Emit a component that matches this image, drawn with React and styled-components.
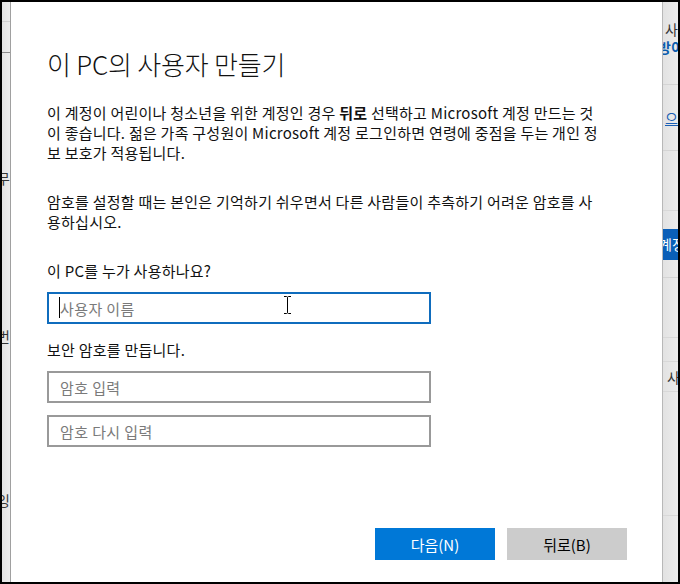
import React from "react";
import styled, { createGlobalStyle } from "styled-components";

const GlobalStyle = createGlobalStyle`
  html, body {
    margin: 0;
    padding: 0;
    background: #000;
  }
  body {
    font-family: "Noto Sans CJK KR", "Noto Sans", sans-serif;
  }
  * { box-sizing: border-box; }
`;

const Frame = styled.div`
  display: flex;
  width: 680px;
  height: 584px;
  padding: 2px;
  background: #000;
  overflow: hidden;
`;

const SideStrip = styled.div`
  position: relative;
  display: flex;
  flex-direction: column;
  width: ${(p) => p.$width || "auto"};
  flex: ${(p) => (p.$grow ? 1 : "none")};
  background: linear-gradient(90deg, #e2e2e2, #ececec);
  overflow: hidden;
  font-size: 14px;
  color: #333;
`;

const StripRow = styled.div`
  display: flex;
  justify-content: ${(p) => (p.$clipLeft ? "flex-end" : "flex-start")};
  align-items: center;
  height: ${(p) => p.$h}px;
  border-bottom: 1px solid ${(p) => p.$line || "transparent"};
  white-space: nowrap;
  color: ${(p) => p.$color || "#333"};
  background: ${(p) => p.$bg || "transparent"};
  font-weight: ${(p) => (p.$bold ? 700 : 400)};
  text-decoration: ${(p) => (p.$underline ? "underline" : "none")};
  padding-left: ${(p) => p.$indent || 0}px;
`;

const Dialog = styled.div`
  display: flex;
  flex-direction: column;
  width: 653px;
  height: 100%;
  background: #fff;
  border-left: 1px solid #a0a0a0;
  border-right: 1px solid #b8b8b8;
  padding: 45px 35px 22px 36px;
  color: #000;
`;

const Title = styled.h1`
  margin: 0 0 22px 0;
  font-size: 26px;
  line-height: 34px;
  font-weight: 300;
  color: #111;
  letter-spacing: -0.2px;
`;

const Paragraph = styled.p`
  margin: 0 0 ${(p) => p.$after || 0}px 0;
  font-size: 15px;
  line-height: 20px;
  font-weight: 400;
  letter-spacing: 0.25px;
  color: #111;
  white-space: nowrap;
  strong { font-weight: 700; }
`;

const Label = styled.div`
  margin: 0 0 11px 0;
  font-size: 15px;
  line-height: 20px;
  letter-spacing: 0.25px;
  color: #111;
`;

const FieldWrap = styled.div`
  position: relative;
  width: 384px;
  height: 32px;
  margin-bottom: ${(p) => p.$after || 0}px;
`;

const Field = styled.input`
  width: 100%;
  height: 100%;
  border: 2px solid ${(p) => (p.$focused ? "#0f6cbd" : "#999")};
  padding: 0 0 0 11px;
  font-family: inherit;
  font-size: 15px;
  letter-spacing: 0.4px;
  color: #000;
  background: #fff;
  outline: none;
  border-radius: 0;
  &::placeholder {
    color: #7a7a7a;
  }
`;

const Caret = styled.span`
  position: absolute;
  left: 12px;
  top: 5px;
  width: 1px;
  height: 21px;
  background: #000;
`;

const Pointer = styled.svg`
  position: absolute;
  left: 236px;
  top: 3px;
`;

const Buttons = styled.div`
  display: flex;
  justify-content: flex-end;
  gap: 12px;
  margin-top: auto;
`;

const Button = styled.button`
  width: 120px;
  height: 32px;
  border: none;
  border-radius: 0;
  font-family: inherit;
  font-size: 15px;
  color: ${(p) => (p.$primary ? "#fff" : "#000")};
  background: ${(p) => (p.$primary ? "#0078d7" : "#cccccc")};
  padding: 0;
`;

export default function App() {
  return (
    <>
      <GlobalStyle />
      <Frame>
        <SideStrip $width="8px">
          <StripRow $h={20} $line="#d0d0d0" />
          <StripRow $h={31} $line="#8a8a8a" />
          <StripRow $h={113} />
          <StripRow $h={24} $clipLeft>설정 무</StripRow>
          <StripRow $h={134} />
          <StripRow $h={24} $clipLeft>보안 번</StripRow>
          <StripRow $h={140} />
          <StripRow $h={24} $clipLeft>설명 잉</StripRow>
        </SideStrip>

        <Dialog>
          <Title>이 PC의 사용자 만들기</Title>
          <Paragraph $after={29}>
            이 계정이 어린이나 청소년을 위한 계정인 경우 <strong>뒤로</strong> 선택하고 Microsoft 계정 만드는 것
            <br />
            이 좋습니다. 젊은 가족 구성원이 Microsoft 계정 로그인하면 연령에 중점을 두는 개인 정
            <br />
            보 보호가 적용됩니다.
          </Paragraph>
          <Paragraph $after={29}>
            암호를 설정할 때는 본인은 기억하기 쉬우면서 다른 사람들이 추측하기 어려운 암호를 사
            <br />
            용하십시오.
          </Paragraph>

          <Label>이 PC를 누가 사용하나요?</Label>
          <FieldWrap $after={16}>
            <Field $focused placeholder="사용자 이름" readOnly />
            <Caret />
            <Pointer width="9" height="20" viewBox="0 0 9 20">
              <path
                d="M1 1.5h2.5c.5 0 1 .5 1 1 0-.5.5-1 1-1H8M4.5 2.5v15M1 18.5h2.5c.5 0 1-.5 1-1 0 .5.5 1 1 1H8"
                fill="none"
                stroke="#fff"
                strokeWidth="3"
              />
              <path
                d="M1 1.5h2.5c.5 0 1 .5 1 1 0-.5.5-1 1-1H8M4.5 2.5v15M1 18.5h2.5c.5 0 1-.5 1-1 0 .5.5 1 1 1H8"
                fill="none"
                stroke="#000"
                strokeWidth="1"
              />
            </Pointer>
          </FieldWrap>

          <Label>보안 암호를 만듭니다.</Label>
          <FieldWrap $after={12}>
            <Field type="text" placeholder="암호 입력" readOnly />
          </FieldWrap>
          <FieldWrap>
            <Field type="text" placeholder="암호 다시 입력" readOnly />
          </FieldWrap>

          <Buttons>
            <Button $primary>다음(N)</Button>
            <Button>뒤로(B)</Button>
          </Buttons>
        </Dialog>

        <SideStrip $grow>
          <StripRow $h={18} />
          <StripRow $h={18} $indent={2}>사용</StripRow>
          <StripRow $h={18} $color="#0b5cad" $bold>
            <span style={{ marginLeft: -5 }}>방이</span>
          </StripRow>
          <StripRow $h={29} $line="#d4d4d4" />
          <StripRow $h={26} />
          <StripRow $h={14} $color="#1a5fb4" $underline $indent={2}>으로</StripRow>
          <StripRow $h={26} $line="#d4d4d4" />
          <StripRow $h={60} $line="#d8d8d8" />
          <StripRow $h={18} />
          <StripRow $h={31} $bg="#0a5fb8" $color="#fff">
            <span style={{ marginLeft: -4 }}>계정</span>
          </StripRow>
          <StripRow $h={18} $line="#d4d4d4" />
          <StripRow $h={60} $line="#d8d8d8" />
          <StripRow $h={24} $line="#d8d8d8" />
          <StripRow $h={30} $line="#d8d8d8" $indent={4}>사</StripRow>
          <StripRow $h={124} $line="#d8d8d8" />
        </SideStrip>
      </Frame>
    </>
  );
}
